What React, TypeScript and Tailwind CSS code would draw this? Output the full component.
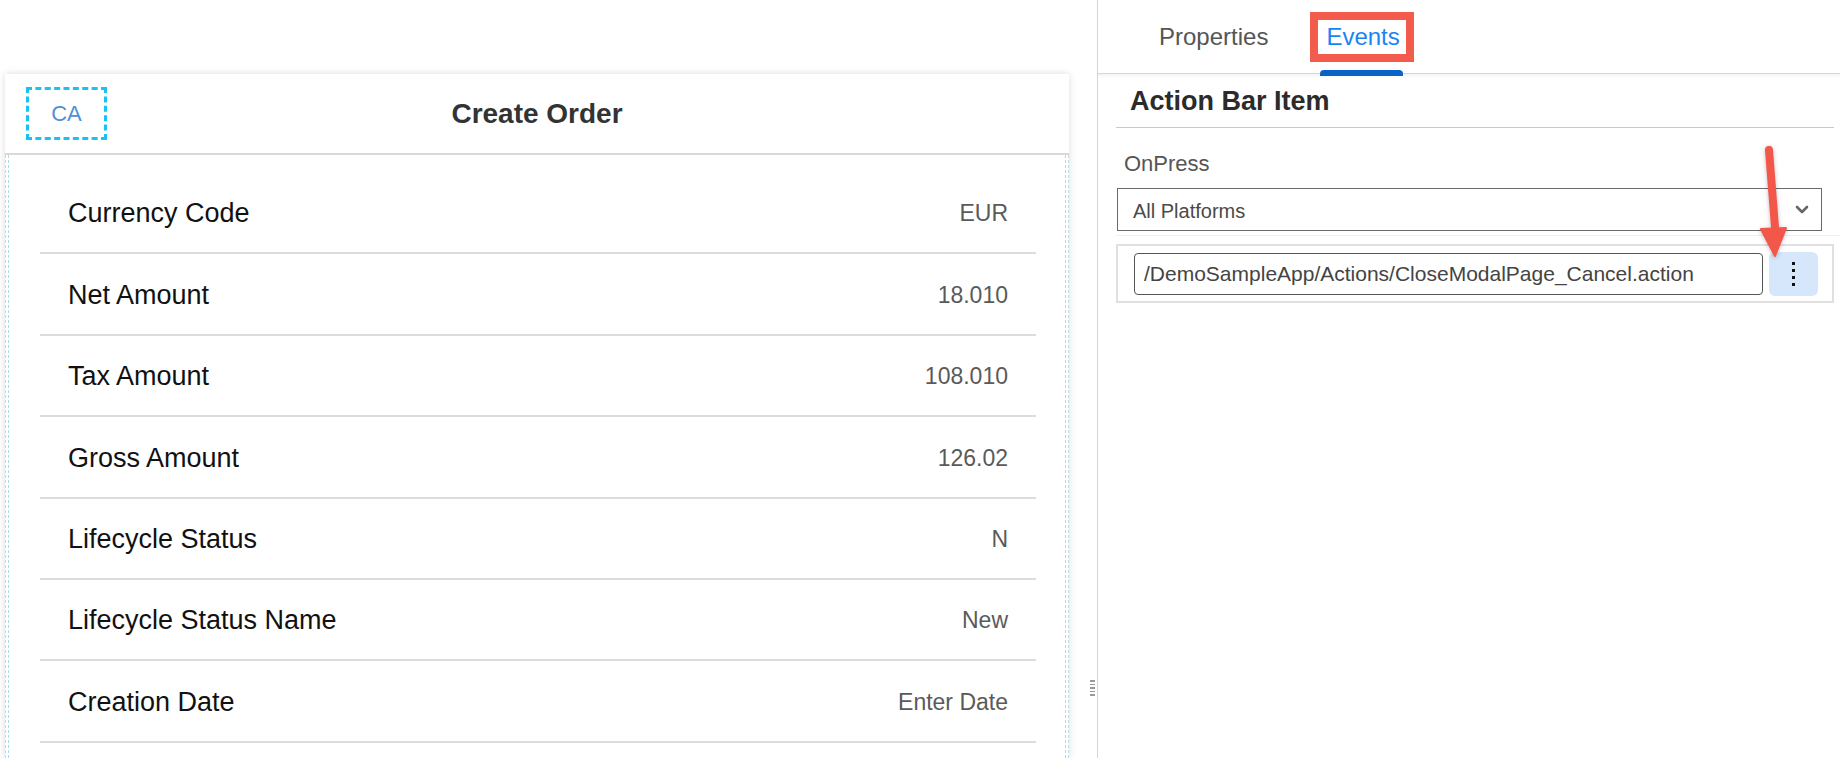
import React from 'react';

const ROWS = [
  { label: 'Currency Code', value: 'EUR' },
  { label: 'Net Amount', value: '18.010' },
  { label: 'Tax Amount', value: '108.010' },
  { label: 'Gross Amount', value: '126.02' },
  { label: 'Lifecycle Status', value: 'N' },
  { label: 'Lifecycle Status Name', value: 'New' },
  { label: 'Creation Date', value: 'Enter Date' },
];

const FieldRow: React.FC<{ label: string; value: string }> = ({ label, value }) => (
  <div className="flex h-[81.4px] shrink-0 items-center justify-between border-b-2 border-[#dcdcdc] px-[28px] pt-[2px]">
    <span className="text-[27px] text-[#111]">{label}</span>
    <span className="text-[23px] text-[#5a5a5a]">{value}</span>
  </div>
);

export default function App() {
  return (
    <div className="relative flex h-[758px] w-[1840px] overflow-hidden bg-white font-['Liberation_Sans',Arial,sans-serif]">
      {/* Left: page preview */}
      <div className="flex w-[1097px] shrink-0 flex-col pt-[74px]">
        <div className="ml-[5px] flex w-[1064px] flex-1 flex-col bg-white shadow-[0_0_7px_rgba(0,0,0,0.14)]">
          {/* header */}
          <div className="grid h-[81px] shrink-0 grid-cols-[1fr_auto_1fr] items-center border-b-2 border-[#d9d9d9]">
            <div className="flex">
              <div className="ml-[21px] flex h-[53px] w-[81px] items-center justify-center border-[3px] border-dashed border-[#18c2f5]">
                <span className="text-[22px] text-[#4f90d8]">CA</span>
              </div>
            </div>
            <div className="text-[28px] font-bold text-[#333]">Create Order</div>
            <div />
          </div>

          {/* body */}
          <div className="flex flex-1 border-x border-dashed border-[#b3dfee]">
            <div className="mx-[2px] flex flex-1 flex-col border-x border-dashed border-[#a8dbec]">
              <div className="ml-[31px] flex w-[996px] flex-col pt-[18px]">
                {ROWS.map((r) => (
                  <FieldRow key={r.label} label={r.label} value={r.value} />
                ))}
              </div>
            </div>
          </div>
        </div>
      </div>

      {/* splitter */}
      <div className="relative w-px shrink-0 bg-[#d4d4da]">
        <div className="absolute left-[-7px] top-[680px] flex w-[5px] flex-col gap-[2px]">
          <div className="h-[1.5px] bg-[#9a9a9a]" />
          <div className="h-[1.5px] bg-[#9a9a9a]" />
          <div className="h-[1.5px] bg-[#9a9a9a]" />
          <div className="h-[1.5px] bg-[#9a9a9a]" />
          <div className="h-[1.5px] bg-[#9a9a9a]" />
        </div>
      </div>

      {/* Right: inspector */}
      <div className="flex flex-1 flex-col">
        <div className="flex h-[74px] shrink-0 items-center border-b border-[#d6d6d6] pl-[61px] shadow-[0_2px_3px_rgba(0,0,0,0.05)]">
          <span className="text-[24px] text-[#555]">Properties</span>
          <div className="relative ml-[42px]">
            <div className="flex h-[50px] items-center border-[8px] border-[#f35b4c] pl-[8px] pr-[6px]">
              <span className="text-[24px] text-[#1b84f5]">Events</span>
            </div>
            <div className="absolute left-[10px] top-[58px] h-[6px] w-[83px] rounded-t-[4px] bg-[#0a64c8]" />
          </div>
        </div>

        <div className="flex h-[53px] items-center pl-[32px] pt-[2px]">
          <span className="text-[27px] font-bold text-[#2b2b2b]">Action Bar Item</span>
        </div>
        <div className="ml-[18px] mr-[6px] h-px bg-[#c9c9c9]" />

        <div className="flex h-[60px] items-center pl-[26px] pt-[10px]">
          <span className="text-[22px] text-[#555]">OnPress</span>
        </div>

        <div className="ml-[19px] flex h-[43px] w-[705px] items-center justify-between border-[1.5px] border-[#6a6a6a] pl-[15px] pr-[12px]">
          <span className="pt-[2px] text-[20px] text-[#4a4a4a]">All Platforms</span>
          <svg width="14" height="9" viewBox="0 0 14 9" fill="none">
            <path d="M2 2l5 5 5-5" stroke="#666" strokeWidth="2.6" strokeLinecap="round" strokeLinejoin="round" />
          </svg>
        </div>
        <div className="ml-[18px] mt-[4px] h-px bg-[#f0f0f0]" />

        <div className="ml-[18px] mr-[6px] mt-[8px] flex h-[59px] items-center gap-[6px] border-2 border-[#e0e0e0] pl-[16px]">
          <div className="flex h-[42px] w-[629px] items-center rounded-[4px] border-[1.5px] border-[#555] pl-[9px]">
            <span className="text-[21px] text-[#444]">/DemoSampleApp/Actions/CloseModalPage_Cancel.action</span>
          </div>
          <div className="flex h-[44px] w-[49px] flex-col items-center justify-center gap-[4px] rounded-[6px] bg-[#d6e7fb]">
            <div className="h-[3px] w-[3px] bg-[#111]" />
            <div className="h-[3px] w-[3px] bg-[#111]" />
            <div className="h-[3px] w-[3px] bg-[#111]" />
            <div className="h-[3px] w-[3px] bg-[#111]" />
          </div>
        </div>
      </div>

      {/* annotation arrow */}
      <svg
        className="absolute left-[1755px] top-[140px] drop-shadow-[0_1px_2px_rgba(0,0,0,0.25)]"
        width="40"
        height="125"
        viewBox="0 0 40 125"
      >
        <path d="M14 10 L21 100" stroke="#f2574a" strokeWidth="8" strokeLinecap="round" fill="none" />
        <path d="M6 89 L31 88 L20 116 Z" fill="#f2574a" stroke="#f2574a" strokeWidth="2" strokeLinejoin="round" />
      </svg>
    </div>
  );
}
